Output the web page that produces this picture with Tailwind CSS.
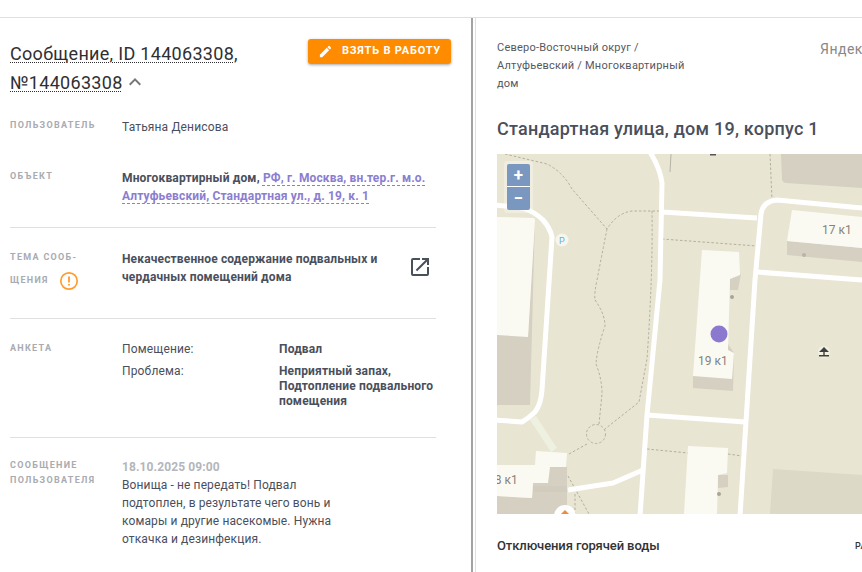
<!DOCTYPE html>
<html lang="ru">
<head>
  <meta charset="UTF-8" />
  <title>Сообщение 144063308</title>
  <script src="https://cdn.jsdelivr.net/npm/@tailwindcss/browser@4"></script>
</head>
<body class="bg-white font-['Roboto',sans-serif] text-[#4a4f5c]">
  <div class="h-[572px] w-[862px] overflow-hidden">
    <div class="h-[18px] border-b border-[#e0e0e0]"></div>
    <div class="flex h-[554px]">
      <!-- Левая колонка -->
      <section class="w-[471px] shrink-0 overflow-hidden pl-[10px] pt-[21px]">
        <div class="flex w-[441px] items-start justify-between">
          <h1 class="w-[270px] text-[18px] leading-[29px] tracking-[0.3px] text-[#2f2f33]">
            <span class="underline decoration-dotted decoration-1 underline-offset-[2px]">Сообщение, ID 144063308, №144063308</span>
            <svg class="-ml-[4px] inline-block align-[-5px]" width="24" height="24" viewBox="0 0 24 24" fill="#777"><path d="M12 8l-6 6 1.41 1.41L12 10.83l4.59 4.58L18 14z"/></svg>
          </h1>
          <button class="flex h-[25px] w-[143px] items-center justify-center gap-[9px] rounded-[3px] bg-[#ff8c00] text-[11px] font-bold tracking-[0.8px] text-white shadow-[0_1px_3px_rgba(0,0,0,0.35)]">
            <svg width="15" height="15" viewBox="0 0 24 24" fill="#fff"><path d="M3 17.25V21h3.75L17.81 9.94l-3.75-3.75L3 17.25zM20.71 7.04a1 1 0 0 0 0-1.41l-2.34-2.34a1 1 0 0 0-1.41 0l-1.83 1.83 3.75 3.75 1.83-1.83z"/></svg>
            ВЗЯТЬ В РАБОТУ
          </button>
        </div>

        <div class="w-[426px]">
          <div class="mt-[20px] flex h-[52px]">
            <div class="w-[112px] shrink-0 pt-px text-[9px] font-bold leading-[15px] tracking-[1.3px] text-[#a9abb1]">ПОЛЬЗОВАТЕЛЬ</div>
            <div class="mt-[1px] text-[12px] leading-[18px] tracking-[0.15px]">Татьяна Денисова</div>
          </div>

          <div class="flex h-[59px] border-b border-[#e0e0e0]">
            <div class="w-[112px] shrink-0 text-[9px] font-bold leading-[15px] tracking-[1.3px] text-[#a9abb1]">ОБЪЕКТ</div>
            <div class="w-[310px] text-[12px] font-bold leading-[18px] tracking-[0.15px]">
              Многоквартирный дом,
              <span class="text-[#8b7ed0] underline decoration-dashed decoration-1 underline-offset-[3px]">РФ, г. Москва, вн.тер.г. м.о. Алтуфьевский, Стандартная ул., д. 19, к. 1</span>
            </div>
          </div>

          <div class="flex h-[91px] border-b border-[#e0e0e0]">
            <div class="w-[112px] shrink-0 pt-[18px] text-[9px] font-bold leading-[23px] tracking-[1.3px] text-[#a9abb1]">
              ТЕМА СООБ-<br />ЩЕНИЯ
              <svg class="ml-[7px] inline-block align-middle" width="20" height="20" viewBox="0 0 20 20"><circle cx="10" cy="10" r="8.2" fill="none" stroke="#ff9d2e" stroke-width="1.7"/><path d="M10 5.5v6M10 13v1.6" stroke="#ff9d2e" stroke-width="1.8" fill="none"/></svg>
            </div>
            <div class="mt-[22px] w-[270px] text-[12px] font-bold leading-[18px] tracking-[0.15px]">Некачественное содержание подвальных и чердачных помещений дома</div>
            <svg class="ml-[16px] mt-[27px]" width="24" height="24" viewBox="0 0 24 24" fill="#4a4f5c"><path d="M19 19H5V5h7V3H5a2 2 0 0 0-2 2v14a2 2 0 0 0 2 2h14a2 2 0 0 0 2-2v-7h-2v7zM14 3v2h3.59l-9.83 9.83 1.41 1.41L19 6.41V10h2V3h-7z"/></svg>
          </div>

          <div class="flex h-[119px] border-b border-[#e0e0e0] pt-[22px]">
            <div class="w-[112px] shrink-0 text-[9px] font-bold leading-[15px] tracking-[1.3px] text-[#a9abb1]">АНКЕТА</div>
            <div class="mt-[1px] grid h-fit grid-cols-[157px_157px] gap-y-[7px] text-[12px] leading-[15px] tracking-[0.15px]">
              <div>Помещение:</div><div class="font-bold">Подвал</div>
              <div>Проблема:</div><div class="font-bold">Неприятный запах, Подтопление подвального помещения</div>
            </div>
          </div>

          <div class="flex pt-[20px]">
            <div class="w-[112px] shrink-0 text-[9px] font-bold leading-[15px] tracking-[1.3px] text-[#a9abb1]">СООБЩЕНИЕ ПОЛЬЗОВАТЕЛЯ</div>
            <div class="w-[218px] text-[12px] leading-[18px] tracking-[0.12px]">
              <div class="mt-[1px] text-[12px] font-bold leading-[17px] text-[#b4b6bb]">18.10.2025 09:00</div>
              <div>Вонища - не передать! Подвал подтоплен, в результате чего вонь и комары и другие насекомые. Нужна откачка и дезинфекция.</div>
            </div>
          </div>
        </div>
      </section>

      <!-- Разделитель -->
      <div class="w-[2px] shrink-0 bg-[#a3a3a3]"></div>
      <div class="w-[2px] shrink-0 bg-white"></div>
      <div class="w-px shrink-0 bg-[#e0e0e0]"></div>

      <!-- Правая колонка -->
      <section class="min-w-0 flex-1 overflow-hidden pl-[21px] pt-[21px]">
        <div class="flex h-[78px] items-start">
          <div class="w-[200px] shrink-0 text-[11px] leading-[18px] tracking-[0.23px] text-[#55585f]">Северо-Восточный округ / Алтуфьевский / Многоквартирный дом</div>
          <div class="ml-[123px] whitespace-nowrap text-[14px] leading-[20px] tracking-[0.5px] text-[#888]">Яндекс</div>
        </div>
        <h2 class="whitespace-nowrap text-[18px] font-medium leading-[24px] tracking-[0.23px] text-[#4a4f5c]">Стандартная улица, дом 19, корпус 1</h2>

        <div class="relative mt-[13px] h-[360px] w-[365px] overflow-hidden bg-[#e9e5d3]">
          <svg class="block" width="365" height="360" viewBox="0 0 365 360" fill="none">
            <!-- серые массивы -->
            <path d="M284 0H365V34L289 29Q285 28 285 25Z" fill="#d5d0c1"/>
            <path d="M276 315L365 321V360H273Z" fill="#dcd9c6"/>

            <!-- дорожки -->
            <g stroke="#b3af9f" stroke-width="1" stroke-dasharray="2.5 2">
              <path d="M8 0L50 10Q66 18 75 35L110 75Q120 59 135 57H165"/>
              <path d="M110 75Q105 100 100 126Q97 140 98 146Q108 160 108 172Q100 195 99 210Q105 225 105 240L102 270"/>
              <path d="M155 57Q156 120 150 205L142 248L108 275"/>
              <path d="M165 85L260 92"/>
              <path d="M273 0L275 46"/>
              <path d="M90 290L72 300"/>
              <path d="M71 322L92 360"/>
              <path d="M78 340V360"/>
              <path d="M150 295L191 299M231 300L245 302"/>
              <circle cx="99" cy="280" r="9.5"/>
            </g>
            <path d="M174 0L173 18" stroke="#b6b3a6" stroke-width="1"/>
            <path d="M213 0H219V1.5H213Z" fill="#555"/>

            <!-- зебра -->
            <path d="M36 264L57 296" stroke="#eef1e0" stroke-width="7"/>

            <!-- дороги -->
            <g stroke="#ffffff" stroke-width="5" stroke-linejoin="round">
              <path d="M153 -2Q163 14 165 29L163 126L150 261L143 362"/>
              <path d="M165 58L260 64"/>
              <path d="M243 362L258 126L264 60Q266 47 280 46L365 54"/>
              <path d="M150 261L248 268"/>
              <path d="M260 118L365 126"/>
              <path d="M-2 51L26 54Q38 58 46 66Q53 74 55 83L45 236Q44 250 38 258Q32 264 25 268L-2 266"/>
              <path d="M71 336L116 329L146 316"/>
            </g>

            <!-- здания -->
            <path d="M0 181H31L38 64L33 251H0Z" fill="#d5d0c1"/>
            <path d="M0 63L36 64Q38 64 38 66L31 183L0 181Z" fill="#fbfaf2"/>

            <path d="M290 87L365 94V108L290 101Z" fill="#d5d0c1"/>
            <path d="M295 56L365 63V94L290 87Z" fill="#fbfaf2"/>
            <circle cx="307" cy="101" r="2" fill="#b9b5a6"/>

            <path d="M196 222V234L236 237L237 199L231 190Z" fill="#d5d0c1"/>
            <path d="M233 122L244 120L241 136H233Z" fill="#d5d0c1"/>
            <path d="M205 96L242 98L243 121L233 125L231 196L237 199L235 225L196 222Z" fill="#fbfaf2"/>
            <circle cx="235" cy="143" r="2" fill="#a9a595"/>

            <path d="M0 342L35 344L36 329L53 313L70 313V360H0Z" fill="#d5d0c1"/>
            <path d="M39 297L70 299L69 313L53 313L51 329L36 329L35 344L0 342V311L38 311Z" fill="#fbfaf2"/>
            <path d="M36 332H70V338H36Z" fill="#cfcabb" opacity="0.6"/>

            <path d="M221 321H231V333L221 334Z" fill="#d5d0c1"/>
            <path d="M191 292L231 294L230 319L221 321L220 360H187Z" fill="#fbfaf2"/>
            <circle cx="222" cy="340" r="2" fill="#a9a595"/>

            <!-- подписи -->
            <g font-family="Roboto, sans-serif" font-size="12" fill="#85827a">
              <text x="325" y="80">17 к1</text>
              <text x="201" y="211">19 к1</text>
              <text x="-9" y="330">18 к1</text>
            </g>

            <!-- значки -->
            <circle cx="65" cy="86" r="6.5" fill="#f7f6ee"/>
            <text x="62" y="90" font-family="Roboto, sans-serif" font-size="9" fill="#6aaee0">P</text>
            <circle cx="327" cy="198" r="6" fill="#f3f0e2"/>
            <path d="M327 193L332 198H322ZM326.3 198H327.7V201H326.3ZM322 201H332V202.5H322Z" fill="#3f3f3f"/>
            <circle cx="68" cy="362" r="11" fill="#ffffff"/>
            <path d="M68 356L73 361L68 366L63 361Z" fill="#f08a3c"/>

            <!-- метка -->
            <circle cx="222" cy="180" r="8.5" fill="#8b78cf"/>
          </svg>

          <!-- масштаб -->
          <div class="absolute left-[7px] top-[7px] rounded-[3px] bg-white/30 p-[3px]">
            <div class="flex h-[23px] w-[23px] items-center justify-center rounded-t-[2px] border-b border-white bg-[#7a97bf] text-[17px] font-bold leading-none text-white">+</div>
            <div class="flex h-[23px] w-[23px] items-center justify-center rounded-b-[2px] bg-[#7a97bf] text-[17px] font-bold leading-none text-white">−</div>
          </div>
        </div>

        <div class="mt-[24px] flex items-center">
          <div class="w-[358px] shrink-0 whitespace-nowrap text-[13px] font-medium leading-[16px] tracking-[-0.1px] text-[#333]">Отключения горячей воды</div>
          <div class="whitespace-nowrap text-[9px] font-medium leading-[16px] tracking-[0.4px] text-[#333]">РА</div>
        </div>
      </section>
    </div>
  </div>
</body>
</html>
